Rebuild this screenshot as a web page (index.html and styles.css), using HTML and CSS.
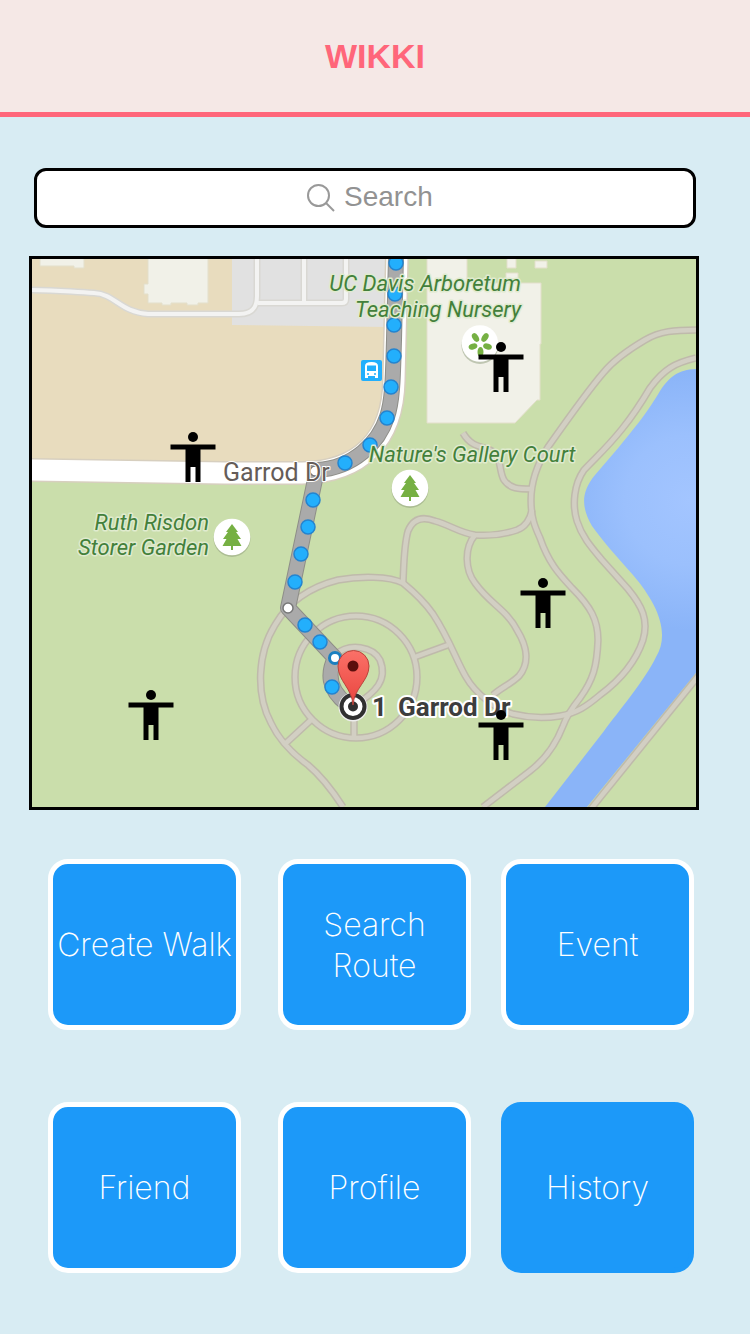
FILE: index.html
```html
<!DOCTYPE html>
<html lang="en">
<head>
<meta charset="utf-8">
<meta name="viewport" content="width=device-width, initial-scale=1">
<title>WIKKI</title>
<link rel="stylesheet" href="styles.css">
</head>
<body>
<header class="topbar"><h1 class="brand">WIKKI</h1></header>
<main class="content">
  <label class="search">
    <svg class="search-icon" viewBox="0 0 28 28" aria-hidden="true"><circle cx="11.500" cy="11.500" r="10.500"/><path d="M19 19l8 8"/></svg>
    <input class="search-input" type="text" placeholder="Search" aria-label="Search">
  </label>
  <section class="map" aria-label="Map">
    <svg class="map-art" viewBox="32 259 664 548" role="img" aria-label="Walking route to 1 Garrod Dr">
      <defs>
        <radialGradient id="water" gradientUnits="userSpaceOnUse" cx="690" cy="500" r="130">
          <stop offset="0" stop-color="#a3c5ff"/><stop offset=".5" stop-color="#9bc0fd"/><stop offset="1" stop-color="#8ab4f8"/>
        </radialGradient>
        <linearGradient id="pin" x1="0" y1="0" x2="0" y2="1">
          <stop offset="0" stop-color="#fb7168"/><stop offset="1" stop-color="#e9453f"/>
        </linearGradient>
        <g id="walker"><circle r="5"/><path d="M-22.500 7.500h45v5h-15V45h-5V30h-5v15h-5V12.500h-15z"/></g>
        <g id="tree">
          <circle cy="1.500" r="18.500" fill="#8d9b7b" opacity=".5"/><circle r="18.300" fill="#fff"/>
          <path d="M0-13l6 8H4l5 7H5.500L9.500 9H1v4h-2V9h-8.500l4-7H-9l5-7h-2z" fill="#76b043"/>
        </g>
        <g id="paths">
          <path d="M696 330C675 330 660 331 645 340C628 350 614 360 604 372C590 388 560 430 548 447C538 463 531 480 531 500C531 518 535 527 540 538C549 564 560 575 572 588C591 607 598 620 598 640C597 667 593 680 580 698C572 708 567 715 563 726C556 744 547 758 530 771L483 807"/>
          <path d="M696 358C675 363 664 369 650 388C640 405 635 413 622 429C606 449 596 457 584 470C574 484 572 505 577 521C582 537 592 548 602 560L628 589C642 606 649 620 643 640C635 664 619 681 600 695C587 706 577 713 560 716C542 719 525 717 513 714C495 709 475 693 466 677C456 660 450 640 433 614C426 604 414 592 403 583C389 576 360 576 338 580C306 588 286 606 275 625C257 654 256 695 271 723C281 744 297 757 308 765C320 775 332 790 343 807"/>
          <path d="M403 583C404 561 404 545 408 531C413 519 422 516 435 521C450 525 460 533 475 535C488 536 505 534 517 530C525 527 530 520 532 510"/>
          <path d="M475 535C464 548 465 570 475 583C490 604 507 610 517 630C527 646 530 663 519 676C511 684 502 687 493 695"/>
          <path d="M463 433C470 445 478 446 488 449C503 455 498 470 504 480C510 489 519 489 531 489"/>
          <circle cx="356" cy="677" r="61"/>
          <path d="M335 655C350 642 373 647 380 660C388 680 376 692 354 706M415 657L448 645M311 720L285 744M354 715V738"/>
          <path d="M700 674L590 810"/>
        </g>
      </defs>
      <rect x="32" y="259" width="664" height="548" fill="#cadeab"/>
      <path d="M696 369C678 370 670 376 660 391C648 411 638 424 619 447L595 475C581 492 581 507 592 526C601 539 617 557 633 575C656 602 671 632 656 657C645 680 618 712 604 731L545 807H587L696 673z" fill="url(#water)"/>
      <use href="#paths" fill="none" stroke="#bfbaab" stroke-width="7.500"/>
      <use href="#paths" fill="none" stroke="#d2cfc3" stroke-width="4.500"/>

      <path d="M32 259H396V390C394 430 365 470 315 472H32z" fill="#e8dcbe"/>
      <path d="M232 259H388V327L232 325z" fill="#e1e1e1"/>
      <g fill="#f1f1e8" stroke="#e3dfcb" stroke-width="1">
        <path d="M40 257H84V268H74V266H40zM148 257H208V303H198V305H187V303H171V305H162V303H148V294H144V284H148z"/>
        <path d="M427 257H467V283H541V344H540V400H537L515 423H427zM507 257H516V268H507zM535 261H547V268H535zM506 273H518V283H506z"/>
      </g>
      <g fill="none" stroke-linejoin="round">
        <path d="M32 290C60 290 70 292 94 293C115 294 120 312 148 314H239C252 314 257 308 257 296V259M258 303H342Q346 303 346 299V259M304 303V259" stroke="#d9d8d3" stroke-width="7"/>
        <path d="M32 290C60 290 70 292 94 293C115 294 120 312 148 314H239C252 314 257 308 257 296V259M258 303H342Q346 303 346 299V259M304 303V259" stroke="#f3f3f2" stroke-width="4"/>
        <path d="M28 470L225 473H302C360 472 393 440 394 380L397 255" stroke="#d7cfbf" stroke-width="24"/>
        <path d="M28 470L225 473H302C360 472 393 440 394 380L397 255" stroke="#fff" stroke-width="21"/>
        <path d="M396 255L394 340C393 372 393 400 387 417C379 442 354 468 317 470L288 608L335 658C328 672 327 689 347 704" stroke="#8e8e88" stroke-width="16"/>
        <path d="M396 255L394 340C393 372 393 400 387 417C379 442 354 468 317 470L288 608L335 658C328 672 327 689 347 704" stroke="#aaa" stroke-width="14"/>
      </g>
      <g fill="#23affc" stroke="#2484cf" stroke-width="1.500">
        <circle cx="396" cy="263" r="7"/><circle cx="395" cy="294" r="7"/><circle cx="394" cy="325" r="7"/><circle cx="394" cy="356" r="7"/><circle cx="391" cy="387" r="7"/><circle cx="387" cy="418" r="7"/><circle cx="370" cy="445" r="7"/><circle cx="345" cy="463" r="7"/><circle cx="313" cy="500" r="7"/><circle cx="308" cy="527" r="7"/><circle cx="301" cy="554" r="7"/><circle cx="295" cy="582" r="7"/><circle cx="305" cy="625" r="7"/><circle cx="320" cy="642" r="7"/><circle cx="332" cy="687" r="7"/>
      </g>
      <circle cx="335" cy="658" r="5.500" fill="#fff" stroke="#1b7fc0" stroke-width="3"/>
      <g fill="#fff" stroke="#777" stroke-width="1.500"><circle cx="288" cy="608" r="5"/><circle cx="315" cy="471" r="5"/></g>

      <rect x="361" y="360" width="21" height="21" rx="2" fill="#23affc"/>
      <path d="M365 378V366Q365 362 371.500 362T378 366V378H375V376H368V378z" fill="#fff"/>
      <path d="M367 365.500h9v5.500h-9z" fill="#23affc"/><circle cx="368" cy="374" r="1" fill="#23affc"/><circle cx="375" cy="374" r="1" fill="#23affc"/>

      <use href="#tree" x="410" y="488"/><use href="#tree" x="232" y="537"/>
      <circle cx="480" cy="345.500" r="18.500" fill="#8d9b7b" opacity=".5"/><circle cx="480" cy="343.500" r="18.300" fill="#fff"/>
      <g fill="#76b043">
        <ellipse cx="475.500" cy="337.500" rx="3" ry="4.800" transform="rotate(-32 475.500 337.500)"/><ellipse cx="485" cy="337.500" rx="3" ry="4.800" transform="rotate(32 485 337.500)"/>
        <ellipse cx="473" cy="346.500" rx="4.500" ry="3" transform="rotate(-20 473 346.500)"/><ellipse cx="487.500" cy="346.500" rx="4.500" ry="3" transform="rotate(20 487.500 346.500)"/><ellipse cx="480.500" cy="352" rx="3" ry="5"/>
      </g>

      <g class="place">
        <text x="521" y="291" text-anchor="end">UC Davis Arboretum</text>
        <text x="521" y="317" text-anchor="end">Teaching Nursery</text>
        <text x="369" y="462">Nature's Gallery Court</text>
        <text x="209" y="530" text-anchor="end">Ruth Risdon</text>
        <text x="209" y="555" text-anchor="end">Storer Garden</text>
      </g>
      <text class="street" x="223" y="481">Garrod Dr</text>
      <text class="address" x="372" y="716">1</text>
      <text class="address" x="398" y="716">Garrod Dr</text>

      <circle cx="353" cy="707" r="14.500" fill="#eee"/>
      <circle cx="353" cy="706.500" r="11.500" fill="#fff" stroke="#303030" stroke-width="4"/><circle cx="353" cy="706.500" r="5" fill="#303030"/>
      <path d="M353 705C352 688 338 681 338 666A15.500 15.500 0 0 1 369 666C369 681 354 688 353 705z" fill="url(#pin)" stroke="#b9443c" stroke-width="1"/>
      <circle cx="353" cy="666" r="5.500" fill="#5b0f0d"/>

      <use href="#walker" x="193" y="437"/><use href="#walker" x="501" y="347"/><use href="#walker" x="543" y="583"/><use href="#walker" x="501" y="715"/><use href="#walker" x="151" y="695"/>
    </svg>
  </section>
  <nav class="tiles" aria-label="Main menu">
    <button class="tile" type="button">Create Walk</button>
    <button class="tile" type="button">Search<br>Route</button>
    <button class="tile" type="button">Event</button>
    <button class="tile" type="button">Friend</button>
    <button class="tile" type="button">Profile</button>
    <button class="tile tile-current" type="button">History</button>
  </nav>
</main>
</body>
</html>
```
FILE: styles.css
```css
* { box-sizing: border-box; }
body {
  margin: 0;
  min-height: 100vh;
  background: #d8ecf3;
  font-family: "Liberation Sans", Arial, sans-serif;
}
.topbar {
  display: flex;
  justify-content: center;
  padding: 36px 0;
  background: #f5e8e6;
  border-bottom: 5px solid #ff667a;
}
.brand {
  margin: 0;
  font-size: 34px;
  line-height: 40px;
  font-weight: 700;
  color: #ff667a;
}
.content { padding: 51px 0 60px; }
.search {
  display: flex;
  align-items: center;
  justify-content: center;
  gap: 9px;
  height: 60px;
  margin: 0 54px 28px 34px;
  padding-left: 13px;
  background: #fff;
  border: 3px solid #000;
  border-radius: 12px;
}
.search-icon {
  width: 28px;
  height: 28px;
  fill: none;
  stroke: #999;
  stroke-width: 2;
}
.search-input {
  width: 92px;
  padding: 0 0 2px;
  border: 0;
  outline: 0;
  background: none;
  font: 28px/32px "Liberation Sans", Arial, sans-serif;
  color: #555;
}
.search-input::placeholder { color: #929292; opacity: 1; }
.map {
  margin: 0 51px 49px 29px;
  border: 3px solid #000;
}
.map-art {
  display: block;
  width: 100%;
  height: auto;
  font-family: Roboto, sans-serif;
}
.place, .street, .address {
  stroke-linejoin: round;
  paint-order: stroke;
}
.place {
  font-size: 22px;
  font-style: italic;
  fill: #43803b;
  stroke: #e0ebcf;
  stroke-width: 3px;
}
.street {
  font-size: 25px;
  fill: #655c58;
  stroke: #fff;
  stroke-width: 2px;
}
.address {
  font-size: 26px;
  font-weight: 700;
  fill: #3d3d3d;
  stroke: #fff;
  stroke-width: 4px;
}
.tiles {
  display: grid;
  grid-template-columns: 1fr 37px 1fr 30px 1fr;
  row-gap: 72px;
  margin: 0 56px 0 48px;
}
.tile {
  min-height: 171px;
  padding: 0;
  border: 5px solid #fff;
  border-radius: 20px;
  background: #1c99f9;
  color: #fff;
  font: 200 32px/41px Inter, "Liberation Sans", sans-serif;
}
.tile:nth-child(3n+1) { grid-column: 1; }
.tile:nth-child(3n+2) { grid-column: 3; }
.tile:nth-child(3n) { grid-column: 5; }
.tile-current { border-color: #1c99f9; }
```
